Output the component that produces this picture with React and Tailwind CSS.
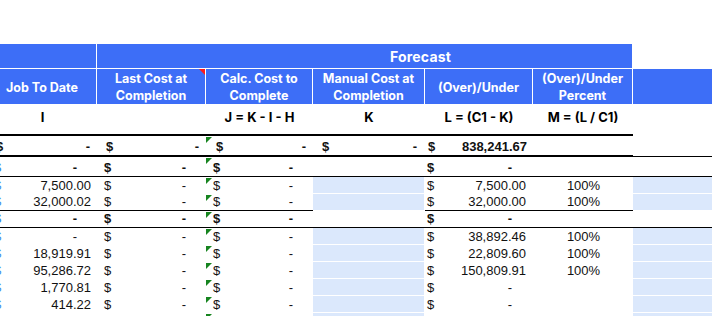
import React from 'react';

const BLUE = 'bg-[#3d6ef7]';
const cols = 'grid grid-cols-[97px_109px_107px_112px_108px_100px_79px]';

const rows = [
  { bold: true, h: 'h-[20px]', line: true, A: '-', E: '-' },
  { h: 'h-[17px]', fill: true, A: '7,500.00', E: '7,500.00', F: '100%' },
  { h: 'h-[17px]', fill: true, line: true, A: '32,000.02', E: '32,000.00', F: '100%' },
  { bold: true, h: 'h-[17px]', line: true, A: '-', E: '-' },
  { h: 'h-[17px]', fill: true, A: '-', E: '38,892.46', F: '100%' },
  { h: 'h-[17px]', fill: true, A: '18,919.91', E: '22,809.60', F: '100%' },
  { h: 'h-[17px]', fill: true, A: '95,286.72', E: '150,809.91', F: '100%' },
  { h: 'h-[17px]', fill: true, A: '1,770.81', E: '-' },
  { h: 'h-[17px]', fill: true, A: '414.22', E: '-' },
  { h: 'h-[17px]', fill: true, A: '-', E: '-' },
];

const GreenFlag = () => (
  <svg className="absolute left-0 top-[1px]" width="6" height="6" viewBox="0 0 6 6">
    <polygon points="0,0 6,0 0,6" fill="#16841f" />
  </svg>
);

// accounting-style value: a dash sits left of where the decimals would be
const Val = ({ v, pr }) => (
  <span style={{ paddingRight: v === '-' ? pr + 14 : pr }}>{v}</span>
);

const Cell = ({ children, className = '' }) => (
  <div className={`relative flex items-end pb-[1px] leading-[15px] overflow-hidden ${className}`}>
    {children}
  </div>
);

const HeadCell = ({ children, last }) => (
  <div
    className={`${BLUE} flex items-center justify-center text-center text-white leading-[17px] pt-[1px] ${
      last ? '' : 'border-r border-white'
    }`}
  >
    {children}
  </div>
);

export default function App() {
  return (
    <div className="w-[712px] h-[316px] overflow-hidden bg-white text-[13px] text-[#111] font-['Liberation_Sans',Arial,sans-serif]">
      <div className="h-[44px]" />

      {/* group header */}
      <div className="flex h-[25px] border-b border-white font-['Inter',sans-serif] font-bold text-white">
        <div className={`${BLUE} w-[97px] border-r border-white`} />
        <div className={`${BLUE} w-[535px] flex items-center justify-center pl-[112px] text-[14px] tracking-[0.2px]`}>
          Forecast
        </div>
      </div>

      {/* column headers */}
      <div className={`${cols} h-[32px] font-['Inter',sans-serif] font-bold text-[12.5px]`}>
        <HeadCell>
          <span className="pr-[12px]">Job To Date</span>
        </HeadCell>
        <div className="relative flex">
          <HeadCell>
            <span className="w-[108px]">
              Last Cost at
              <br />
              Completion
            </span>
          </HeadCell>
          <svg className="absolute right-[1px] top-0" width="6" height="6" viewBox="0 0 6 6">
            <polygon points="0,0 6,0 6,6" fill="#ff1a1a" />
          </svg>
        </div>
        <HeadCell>
          Calc. Cost to
          <br />
          Complete
        </HeadCell>
        <HeadCell>
          Manual Cost at
          <br />
          Completion
        </HeadCell>
        <HeadCell>(Over)/Under</HeadCell>
        <HeadCell>
          (Over)/Under
          <br />
          Percent
        </HeadCell>
        <HeadCell last />
      </div>

      {/* formula row */}
      <div className={`${cols} h-[33px] font-['Inter',sans-serif] font-bold text-[13px] text-black`}>
        <div className="flex items-end justify-center pb-[7px] pr-[12px]">I</div>
        <div />
        <div className="flex items-end justify-center pb-[7px]">J = K - I - H</div>
        <div className="flex items-end justify-center pb-[7px]">K</div>
        <div className="flex items-end justify-center pb-[7px]">L = (C1 - K)</div>
        <div className="flex items-end justify-center pb-[7px]">M = (L / C1)</div>
        <div />
      </div>

      {/* totals row */}
      <div className={`${cols} h-[23px] font-bold`}>
        <Cell className="justify-between border-y-2 border-black">
          <span className="-ml-[4px]">$</span>
          <span className="pr-[7px]">-</span>
        </Cell>
        <Cell className="justify-between border-y-2 border-black pl-[9px] pr-[7px]">
          <span>$</span>
          <span>-</span>
        </Cell>
        <Cell className="justify-between border-y-2 border-black pl-[10px] pr-[7px]">
          <GreenFlag />
          <span>$</span>
          <span>-</span>
        </Cell>
        <Cell className="justify-between border-y-2 border-black pl-[9px] pr-[8px]">
          <span>$</span>
          <span>-</span>
        </Cell>
        <Cell className="justify-between border-y-2 border-black pl-[3px] pr-[6px]">
          <span>$</span>
          <span>838,241.67</span>
        </Cell>
        <Cell className="border-y-2 border-black" />
        <Cell className="border-b border-black" />
      </div>

      {rows.map((r, i) => {
        const line = r.line ? 'border-b border-black' : '';
        const fill = r.fill
          ? `bg-[#dbe8fc] border-r border-white ${r.line ? '' : 'border-b border-b-white'}`
          : '';
        return (
          <div key={i} className={`${cols} ${r.h} ${r.bold ? 'font-bold' : ''}`}>
            <Cell className={`justify-between ${line}`}>
              <span className="-ml-[6px] text-[#3b8cf0]">$</span>
              <Val v={r.A} pr={6} />
            </Cell>
            <Cell className={`justify-between pl-[7px] ${line}`}>
              <span>$</span>
              <Val v="-" pr={6} />
            </Cell>
            <Cell className={`justify-between pl-[7px] ${line}`}>
              <GreenFlag />
              <span>$</span>
              <Val v="-" pr={6} />
            </Cell>
            <Cell className={`${line} ${fill}`} />
            <Cell className={`justify-between pl-[2px] ${line}`}>
              <span>$</span>
              <Val v={r.E} pr={7} />
            </Cell>
            <Cell className={`justify-center pl-[1px] ${line}`}>{r.F}</Cell>
            <Cell className={`${line} ${r.fill ? 'bg-[#dbe8fc] border-b border-b-white' : ''} ${r.line && r.fill ? 'border-b-black' : ''}`} />
          </div>
        );
      })}
    </div>
  );
}
